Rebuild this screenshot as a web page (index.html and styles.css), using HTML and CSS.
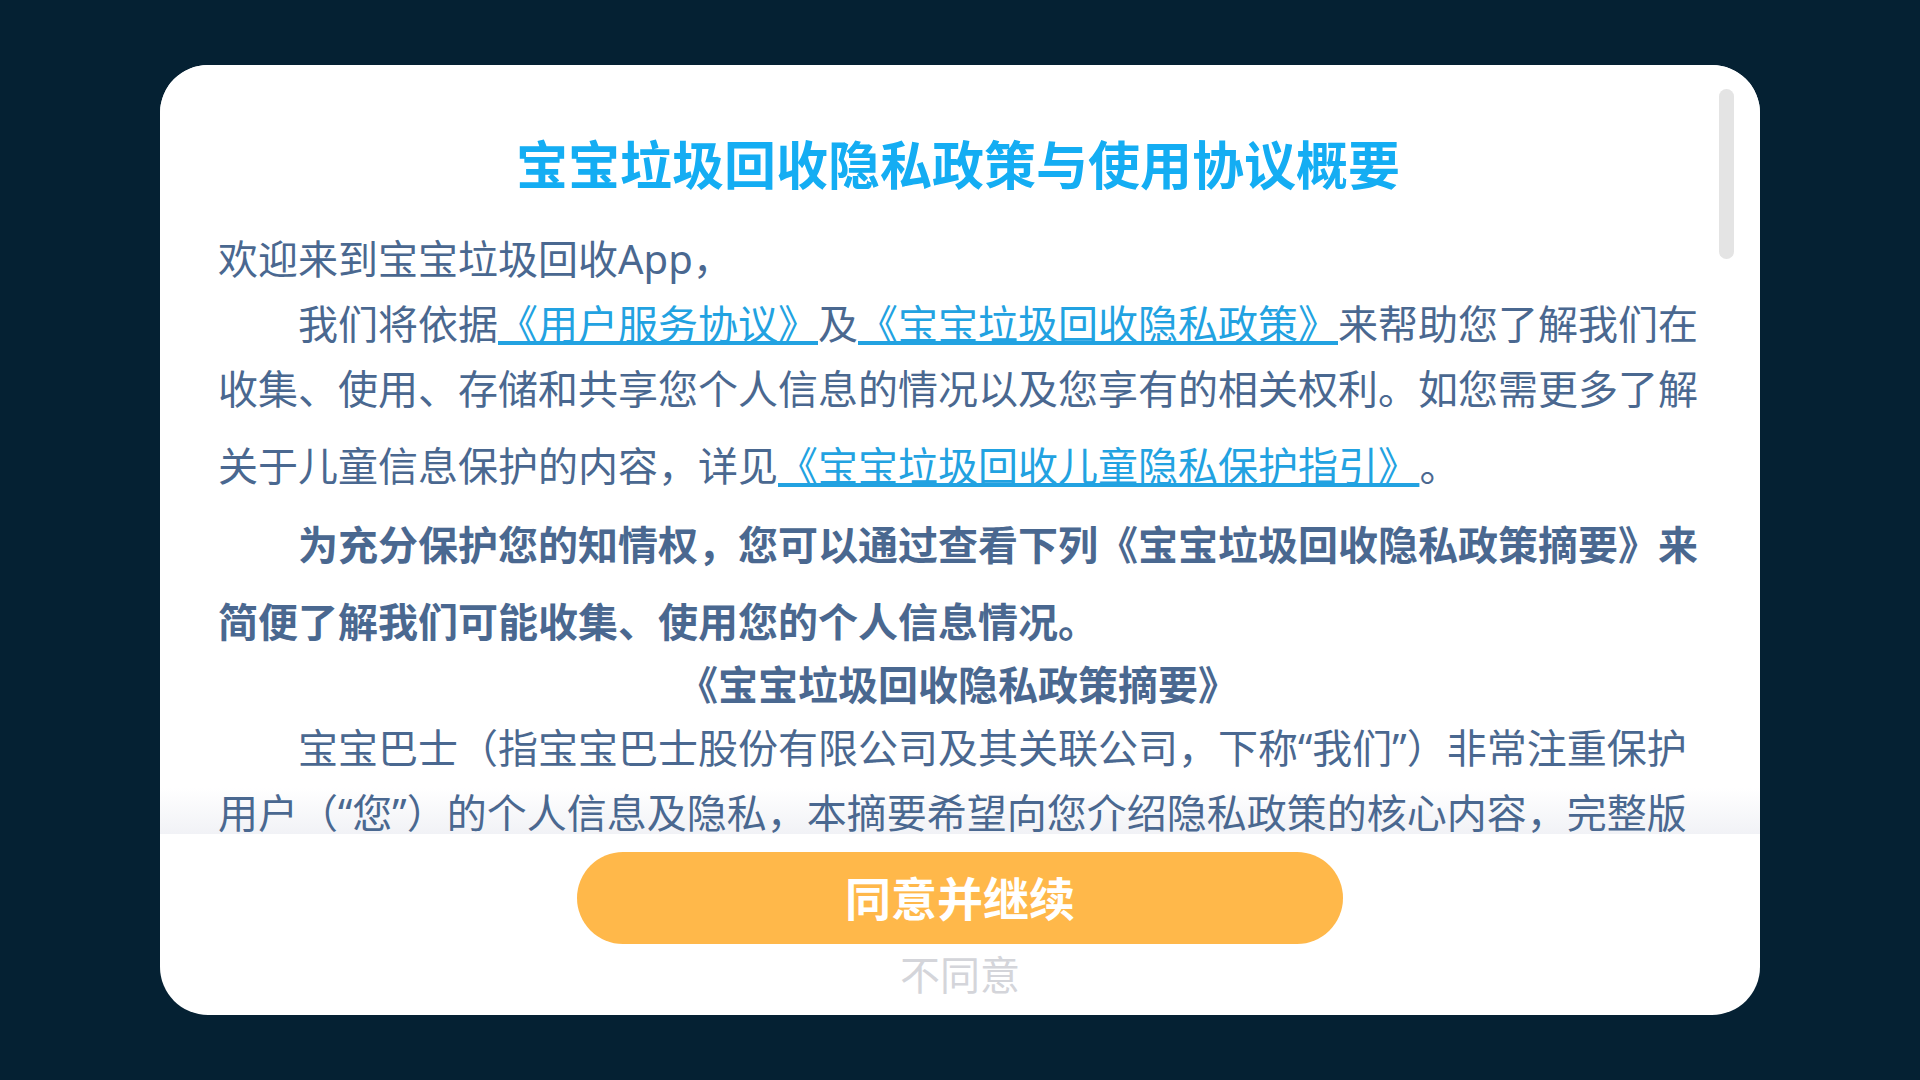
FILE: index.html
```html
<!DOCTYPE html>
<html lang="zh-CN">
<head>
    <meta charset="UTF-8">
    <title>隐私政策与使用协议概要</title>
    <link rel="stylesheet" href="styles.css">
</head>
<body>
    <div class="dialog">
        <div class="scroll-bar"></div>
        <div class="policy">
            <h1 class="policy-title">宝宝垃圾回收隐私政策与使用协议概要</h1>
            <p class="line">欢迎来到宝宝垃圾回收App，</p>
            <p class="indent">我们将依据<a href="#">《用户服务协议》</a>及<a href="#">《宝宝垃圾回收隐私政策》</a>来帮助您了解我们在收集、使用、存储和共享您个人信息的情况以及您享有的相关权利。如您需更多了解关于儿童信息保护的内容，详见<a href="#" class="tall-link">《宝宝垃圾回收儿童隐私保护指引》&nbsp;</a>。</p>
            <p class="indent strong">为充分保护您的知情权，您可以通过查看下列《宝宝垃圾回收隐私政策摘要》来简便了解我们可能收集、使用您的个人信息情况。</p>
            <h2 class="sub-title">《宝宝垃圾回收隐私政策摘要》</h2>
            <p class="indent summary">宝宝巴士（指宝宝巴士股份有限公司及其关联公司，下称“我们”）非常注重保护用户（“您”）的个人信息及隐私，本摘要希望向您介绍隐私政策的核心内容，完整版隐私政策请您仔细阅读。</p>
        </div>
        <div class="actions">
            <button class="agree-btn">同意并继续</button>
            <button class="refuse-btn">不同意</button>
        </div>
    </div>
</body>
</html>
```

FILE: styles.css
```css
* {
    box-sizing: border-box;
}

body {
    margin: 0;
    height: 100vh;
    background-color: #052133;
    font-family: "Noto Sans", "Noto Sans CJK SC", sans-serif;
    display: flex;
    justify-content: center;
    align-items: center;
}

.dialog {
    width: 1600px;
    height: 950px;
    background-color: #ffffff;
    border-radius: 48px;
    display: flex;
    flex-direction: column;
    overflow: hidden;
    position: relative;
}

.scroll-bar {
    position: absolute;
    top: 24px;
    right: 26px;
    width: 15px;
    height: 170px;
    border-radius: 8px;
    background-color: #e4e4e4;
}

/* Texto do termo */
.policy {
    flex: 1;
    overflow: hidden;
    padding: 58px 62px 0 58px;
    color: #4a6890;
    font-size: 40px;
    background: linear-gradient(to bottom, #ffffff calc(100% - 46px), #f1f2f6 100%);
}

.policy-title {
    margin: 0 0 23px;
    font-family: "Noto Sans CJK SC", sans-serif;
    font-size: 52px;
    line-height: 80px;
    font-weight: 700;
    color: #14adf3;
    text-align: center;
}

.policy p {
    margin: 0;
    line-height: 65px;
}

.indent {
    text-indent: 2em;
}

.policy a {
    color: #22a2e1;
    text-decoration: underline;
}

.tall-link {
    line-height: 89px;
    word-spacing: -9px;
}

.policy .strong {
    margin-top: -4px;
    font-weight: 700;
    line-height: 77px;
}

.sub-title {
    margin: 1px 0 0;
    font-size: 40px;
    line-height: 47px;
    font-weight: 700;
    text-align: center;
}

.policy .summary {
    margin-top: 7px;
}

/* Botoes */
.actions {
    height: 181px;
    padding-top: 18px;
    display: flex;
    flex-direction: column;
    align-items: center;
}

.agree-btn {
    width: 766px;
    height: 92px;
    padding: 0 0 5px;
    border: none;
    border-radius: 46px;
    background-color: #ffb84a;
    color: #ffffff;
    font-family: "Noto Sans CJK SC", sans-serif;
    font-size: 46px;
    font-weight: 700;
    cursor: pointer;
}

.refuse-btn {
    margin-top: 9px;
    padding: 0;
    border: none;
    background: none;
    color: #d4d5da;
    font-family: "Noto Sans CJK SC", sans-serif;
    font-size: 40px;
    line-height: 40px;
    cursor: pointer;
}
```
